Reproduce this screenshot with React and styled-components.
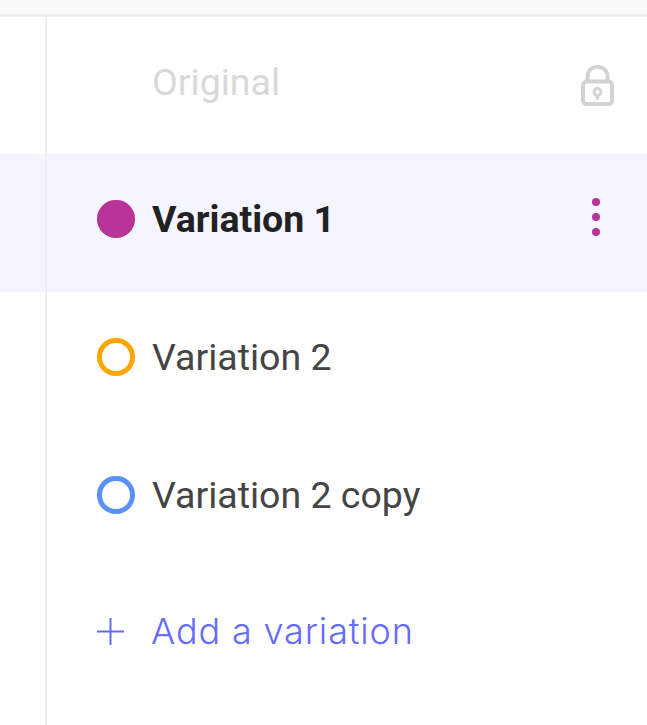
import React from "react";
import styled, { createGlobalStyle } from "styled-components";

const GlobalStyle = createGlobalStyle`
  html, body {
    margin: 0;
    padding: 0;
    background: #fff;
    overflow: hidden;
  }
`;

const Page = styled.div`
  width: 647px;
  height: 725px;
  display: flex;
  flex-direction: column;
  font-family: Roboto, "Liberation Sans", sans-serif;
`;

const TopBar = styled.div`
  height: 14px;
  flex: none;
  background: #f9f9f9;
  border-bottom: 3px solid #eeeeee;
`;

const List = styled.div`
  flex: 1;
  display: flex;
  flex-direction: column;
`;

const Row = styled.div`
  height: ${props => props.height || 138}px;
  flex: ${props => (props.grow ? 1 : "none")};
  display: flex;
  background: ${props => (props.selected ? "#f5f5ff" : "#fff")};
`;

const Gutter = styled.div`
  width: 45px;
  flex: none;
  border-right: 2px solid #eeeeee;
`;

const RowBody = styled.div`
  flex: 1;
  display: flex;
  align-items: center;
  padding: ${props => props.padding || "0 33px 8px 50px"};
`;

const Dot = styled.span`
  width: 37.5px;
  height: 37.5px;
  box-sizing: border-box;
  flex: none;
  border-radius: 50%;
  border: 5px solid ${props => props.color};
  background: ${props => (props.filled ? props.color : "transparent")};
`;

const DotSlot = styled.span`
  width: 37.5px;
  height: 37.5px;
  flex: none;
`;

const Label = styled.span`
  flex: 1;
  margin-left: 17.5px;
  font-size: 37.5px;
  line-height: 42px;
  font-weight: ${props => (props.selected ? 700 : 400)};
  color: ${props => props.color || "#454545"};
  white-space: nowrap;
`;

const AddLabel = styled.span`
  margin-left: 27px;
  font-family: Inter, "Open Sans", sans-serif;
  font-size: 36px;
  font-weight: 300;
  line-height: 44px;
  letter-spacing: 0.85px;
  color: #666bff;
  white-space: nowrap;
`;

const KebabDots = styled.span`
  display: flex;
  flex-direction: column;
  gap: 6.7px;
  margin: 0 14px 4px 0;
`;

const KebabDot = styled.span`
  width: 8px;
  height: 8px;
  border-radius: 50%;
  background: #b93498;
`;

const Lock = styled.svg`
  margin: 7px 0 0 0;
`;

const LockIcon = () => (
  <Lock width="33" height="41" viewBox="0 0 33 41" fill="none" stroke="#d3d3d3" strokeWidth="4">
    <path d="M6.5 16.5V12C6.5 6 10.5 2 16.5 2S26.5 6 26.5 12V16.5" />
    <rect x="2" y="16.5" width="29" height="22.5" rx="3.5" />
    <circle cx="16.5" cy="27" r="3.4" strokeWidth="3" />
    <path d="M16.5 29.5V34.5" strokeWidth="3.4" />
  </Lock>
);

const PlusIcon = () => (
  <svg width="27" height="27" viewBox="0 0 27 27" stroke="#666bff" strokeWidth="2" fill="none">
    <path d="M13.5 0V27M0 13.5H27" />
  </svg>
);

const variations = [
  { name: "Variation 1", color: "#b93498", selected: true },
  { name: "Variation 2", color: "#ffa500" },
  { name: "Variation 2 copy", color: "#5b91f5" },
];

const App = () => (
  <Page>
    <GlobalStyle />
    <TopBar />
    <List>
      <Row height={137}>
        <Gutter />
        <RowBody>
          <DotSlot />
          <Label color="#d9d9d9">Original</Label>
          <LockIcon />
        </RowBody>
      </Row>
      {variations.map(v => (
        <Row key={v.name} selected={v.selected}>
          <Gutter />
          <RowBody>
            <Dot color={v.color} filled={v.selected} />
            <Label selected={v.selected} color={v.selected ? "#222222" : undefined}>
              {v.name}
            </Label>
            {v.selected && (
              <KebabDots>
                <KebabDot />
                <KebabDot />
                <KebabDot />
              </KebabDots>
            )}
          </RowBody>
        </Row>
      ))}
      <Row height={126}>
        <Gutter />
        <RowBody padding="0 32px 0 50px">
          <PlusIcon />
          <AddLabel>Add a variation</AddLabel>
        </RowBody>
      </Row>
      <Row grow>
        <Gutter />
      </Row>
    </List>
  </Page>
);

export default App;
